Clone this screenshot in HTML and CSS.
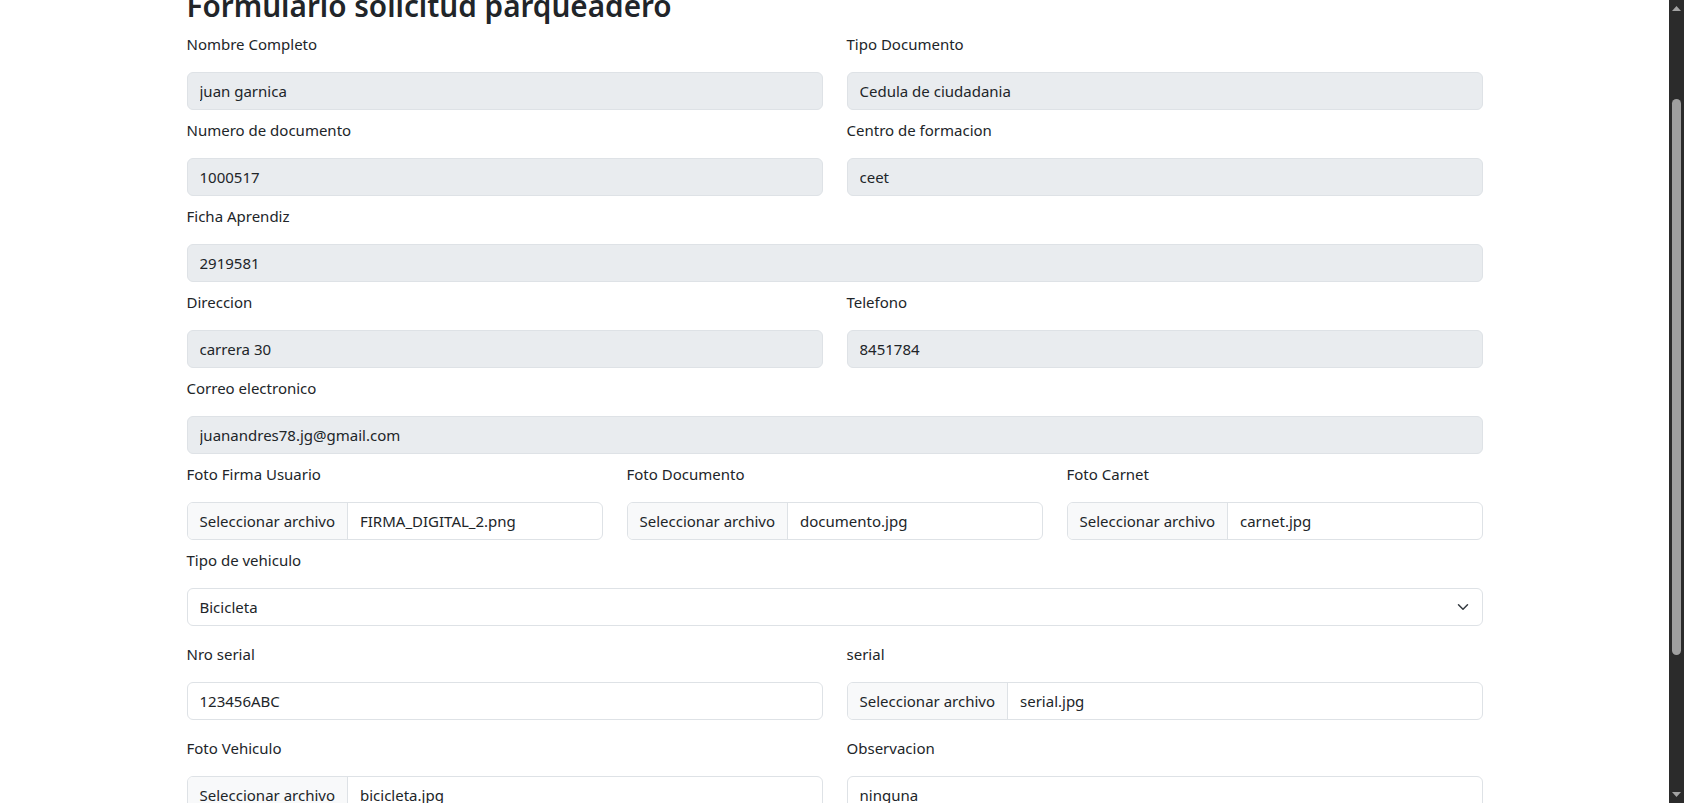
FILE: index.html
```html
<!DOCTYPE html>
<html lang="es">
<head>
<meta charset="utf-8">
<title>Formulario solicitud parqueadero</title>
<link rel="stylesheet" href="styles.css">
</head>
<body>
<main class="container">
  <h2 class="title">Formulario solicitud parqueadero</h2>
  <form class="form">
    <div class="row row-2">
      <div class="field">
        <label class="label">Nombre Completo</label>
        <input class="control readonly" type="text" value="juan garnica" readonly>
      </div>
      <div class="field">
        <label class="label">Tipo Documento</label>
        <input class="control readonly" type="text" value="Cedula de ciudadania" readonly>
      </div>
    </div>
    <div class="row row-2">
      <div class="field">
        <label class="label">Numero de documento</label>
        <input class="control readonly" type="text" value="1000517" readonly>
      </div>
      <div class="field">
        <label class="label">Centro de formacion</label>
        <input class="control readonly" type="text" value="ceet" readonly>
      </div>
    </div>
    <div class="field">
      <label class="label">Ficha Aprendiz</label>
      <input class="control readonly" type="text" value="2919581" readonly>
    </div>
    <div class="row row-2">
      <div class="field">
        <label class="label">Direccion</label>
        <input class="control readonly" type="text" value="carrera 30" readonly>
      </div>
      <div class="field">
        <label class="label">Telefono</label>
        <input class="control readonly" type="text" value="8451784" readonly>
      </div>
    </div>
    <div class="field">
      <label class="label">Correo electronico</label>
      <input class="control readonly" type="text" value="juanandres78.jg@gmail.com" readonly>
    </div>
    <div class="row row-3">
      <div class="field">
        <label class="label">Foto Firma Usuario</label>
        <div class="file"><span class="file-btn">Seleccionar archivo</span><span class="file-name">FIRMA_DIGITAL_2.png</span></div>
      </div>
      <div class="field">
        <label class="label">Foto Documento</label>
        <div class="file"><span class="file-btn">Seleccionar archivo</span><span class="file-name">documento.jpg</span></div>
      </div>
      <div class="field">
        <label class="label">Foto Carnet</label>
        <div class="file"><span class="file-btn">Seleccionar archivo</span><span class="file-name">carnet.jpg</span></div>
      </div>
    </div>
    <div class="field field-lg">
      <label class="label">Tipo de vehiculo</label>
      <div class="select-wrap">
        <select class="control select">
          <option>Bicicleta</option>
        </select>
        <svg class="chevron" width="12" height="12" viewBox="0 0 16 16"><path d="M2 5l6 6 6-6" fill="none" stroke="#343a40" stroke-width="2" stroke-linecap="round" stroke-linejoin="round"/></svg>
      </div>
    </div>
    <div class="row row-2">
      <div class="field field-lg">
        <label class="label">Nro serial</label>
        <input class="control" type="text" value="123456ABC">
      </div>
      <div class="field field-lg">
        <label class="label">serial</label>
        <div class="file"><span class="file-btn">Seleccionar archivo</span><span class="file-name">serial.jpg</span></div>
      </div>
    </div>
    <div class="row row-2">
      <div class="field field-lg">
        <label class="label">Foto Vehiculo</label>
        <div class="file"><span class="file-btn">Seleccionar archivo</span><span class="file-name">bicicleta.jpg</span></div>
      </div>
      <div class="field field-lg">
        <label class="label">Observacion</label>
        <input class="control" type="text" value="ninguna">
      </div>
    </div>
  </form>
</main>
<div class="scrollbar" aria-hidden="true">
  <svg class="sb-arrow sb-up" width="15" height="15" viewBox="0 0 15 15"><polygon points="3,11 12,11 7.5,6" fill="#a3a3a3"/></svg>
  <div class="sb-thumb"></div>
  <svg class="sb-arrow sb-down" width="15" height="15" viewBox="0 0 15 15"><polygon points="3,4 12,4 7.5,9" fill="#a3a3a3"/></svg>
</div>
</body>
</html>
```
FILE: styles.css
```css
html, body {
  margin: 0;
  height: 100%;
  overflow: hidden;
  background: #fff;
}

body {
  padding-right: 15px;
  box-sizing: border-box;
  font-family: "Noto Sans", "Open Sans", sans-serif;
  font-size: 15px;
  line-height: 24px;
  color: #212529;
}

.container {
  max-width: 1320px;
  margin: 0 auto;
  padding: 0 12px;
  box-sizing: border-box;
}

.title {
  margin: -13px 0 7px;
  font-size: 29.7px;
  line-height: 38px;
  font-weight: 600;
  color: #212529;
  white-space: nowrap;
}

.form {
  margin: 0;
}

.row {
  display: grid;
  column-gap: 24px;
}

.row-2 {
  grid-template-columns: 1fr 1fr;
}

.row-3 {
  grid-template-columns: 1fr 1fr 1fr;
}

.field {
  margin-bottom: 8px;
  min-width: 0;
}

.field-lg {
  margin-bottom: 16px;
}

.label {
  display: block;
  line-height: 24px;
  margin-bottom: 16px;
}

.control {
  display: block;
  width: 100%;
  height: 38px;
  box-sizing: border-box;
  padding: 6px 12px;
  font: inherit;
  line-height: 24px;
  color: #212529;
  background: #fff;
  border: 1px solid #dee2e6;
  border-radius: 6px;
  outline: none;
  margin: 0;
}

.readonly {
  background: #e9ecef;
}

.select-wrap {
  position: relative;
}

.select {
  appearance: none;
  -webkit-appearance: none;
  padding-right: 36px;
}

.chevron {
  position: absolute;
  right: 14px;
  top: 13px;
  pointer-events: none;
}

.file {
  display: flex;
  height: 38px;
  box-sizing: border-box;
  border: 1px solid #dee2e6;
  border-radius: 6px;
  overflow: hidden;
  background: #fff;
}

.file-btn {
  display: flex;
  align-items: center;
  padding: 0 12px;
  background: #f8f9fa;
  border-right: 1px solid #dee2e6;
  white-space: nowrap;
}

.file-name {
  display: flex;
  align-items: center;
  padding: 0 12px;
  white-space: nowrap;
  overflow: hidden;
}

.scrollbar {
  position: fixed;
  top: 0;
  right: 0;
  bottom: 0;
  width: 15px;
  background: #2b2b2b;
}

.sb-arrow {
  position: absolute;
  left: 0;
}

.sb-up {
  top: 0;
}

.sb-down {
  bottom: 0;
}

.sb-thumb {
  position: absolute;
  top: 99px;
  left: 3px;
  width: 9px;
  height: 556px;
  border-radius: 5px;
  background: #9f9f9f;
}
```
